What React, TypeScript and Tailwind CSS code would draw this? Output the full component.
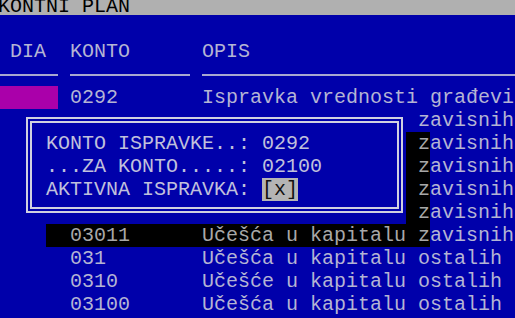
type Seg = { t: string; c?: string };

const TXT = "text-[#b4b4d4]";
const SHADOW = "bg-black text-[#a8a8a8]";

function Row({ segs }: { segs: Seg[] }) {
  return (
    <div className="flex h-[23px] whitespace-pre">
      {segs.map((s, i) => (
        <span key={i} className={s.c ?? TXT}>
          {s.t}
        </span>
      ))}
    </div>
  );
}

// the part of these rows under the dialog is blank; cols 34-35 carry its shadow
const blank = (n: number) => " ".repeat(n);

export default function App() {
  return (
    <div className="relative w-[515px] h-[318px] overflow-hidden bg-[#0000aa] font-['Liberation_Mono',monospace] text-[20px] leading-[23px]">
      {/* title bar */}
      <div className="h-[15px] overflow-hidden bg-[#b0b0b0] text-black">
        <div className="-mt-[5px] -ml-[2px] whitespace-pre">KONTNI PLAN</div>
      </div>

      {/* table */}
      <div className="mt-[2px] -ml-[2px] flex flex-col">
        <Row segs={[{ t: " " }]} />
        <Row segs={[{ t: " DIA  KONTO      OPIS" }]} />
        <div className="flex h-[23px] items-center">
          <div className="h-[2px] w-[60px] bg-[#a8a8d0]" />
          <div className="w-[12px]" />
          <div className="h-[2px] w-[120px] bg-[#a8a8d0]" />
          <div className="w-[12px]" />
          <div className="h-[2px] flex-1 bg-[#a8a8d0]" />
        </div>
        <Row
          segs={[
            { t: "     ", c: "bg-[#aa00aa]" },
            { t: " 0292       Ispravka vrednosti građevinskih" },
          ]}
        />
        <Row segs={[{ t: blank(35) + "zavisnih" }]} />
        {[0, 1, 2, 3].map((k) => (
          <Row
            key={k}
            segs={[{ t: blank(34) }, { t: " z", c: SHADOW }, { t: "avisnih" }]}
          />
        ))}
        <Row
          segs={[
            { t: "    " },
            { t: "  03011      Učešća u kapitalu z", c: SHADOW },
            { t: "avisnih" },
          ]}
        />
        <Row segs={[{ t: "      031        Učešća u kapitalu ostalih" }]} />
        <Row segs={[{ t: "      0310       Učešće u kapitalu ostalih" }]} />
        <Row segs={[{ t: "      03100      Učešća u kapitalu ostalih" }]} />
      </div>

      {/* dialog */}
      <div className="absolute left-[22px] top-[109px] flex h-[115px] w-[384px] bg-[#0000aa] pt-[8px] pl-[4px] pr-[3px] pb-[11px]">
        <div className="flex flex-1 border-2 border-[#d0d0e0] p-[2px]">
          <div className="flex-1 border-2 border-[#d0d0e0] pl-[14px] pt-[9px] whitespace-pre text-[#c0c0dc]">
            <div className="h-[23px]">KONTO ISPRAVKE..: 0292</div>
            <div className="h-[23px]">...ZA KONTO.....: 02100</div>
            <div className="h-[23px]">
              AKTIVNA ISPRAVKA: <span className="bg-[#b4b4b4] text-[#111]">[x]</span>
            </div>
          </div>
        </div>
      </div>
    </div>
  );
}
